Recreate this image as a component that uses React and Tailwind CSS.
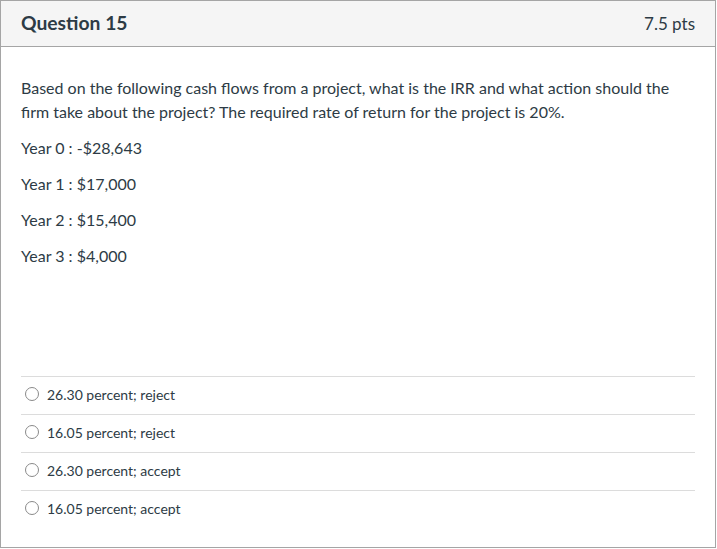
import React from "react";

const years = [
  ["Year 0", "-$28,643"],
  ["Year 1", "$17,000"],
  ["Year 2", "$15,400"],
  ["Year 3", "$4,000"],
];

const answers = [
  "26.30 percent; reject",
  "16.05 percent; reject",
  "26.30 percent; accept",
  "16.05 percent; accept",
];

export default function App() {
  return (
    <div className="w-[717px] h-[549px] bg-white font-['Lato',sans-serif] text-[#2d3b45]">
      <div className="w-[716px] h-[548px] border border-[#a5a5a5] flex flex-col">
        {/* header */}
        <div className="h-[46px] bg-[#f5f5f5] border-b border-[#a5a5a5] flex items-center justify-between px-5">
          <h2 className="text-[19.3px] font-bold">Question 15</h2>
          <span className="text-[17px]">7.5 pts</span>
        </div>

        {/* question */}
        <div className="px-5 pt-[29px] text-[16px] leading-6">
          <p>
            Based on the following cash flows from a project, what is the IRR and what action should the
            firm take about the project? The required rate of return for the project is 20%.
          </p>
          {years.map(([y, v]) => (
            <p key={y} className="mt-3">
              {y} : {v}
            </p>
          ))}
        </div>

        {/* answers */}
        <div className="px-5 mt-[108px]">
          {answers.map((a) => (
            <label key={a} className="h-[38px] border-t border-[#dcdcdc] flex items-center gap-2 pl-[4px] pb-[3px] text-[14px]">
              <span className="w-[14px] h-[14px] rounded-full border border-[#8a8a8a] bg-white" />
              {a}
            </label>
          ))}
        </div>
      </div>
    </div>
  );
}
